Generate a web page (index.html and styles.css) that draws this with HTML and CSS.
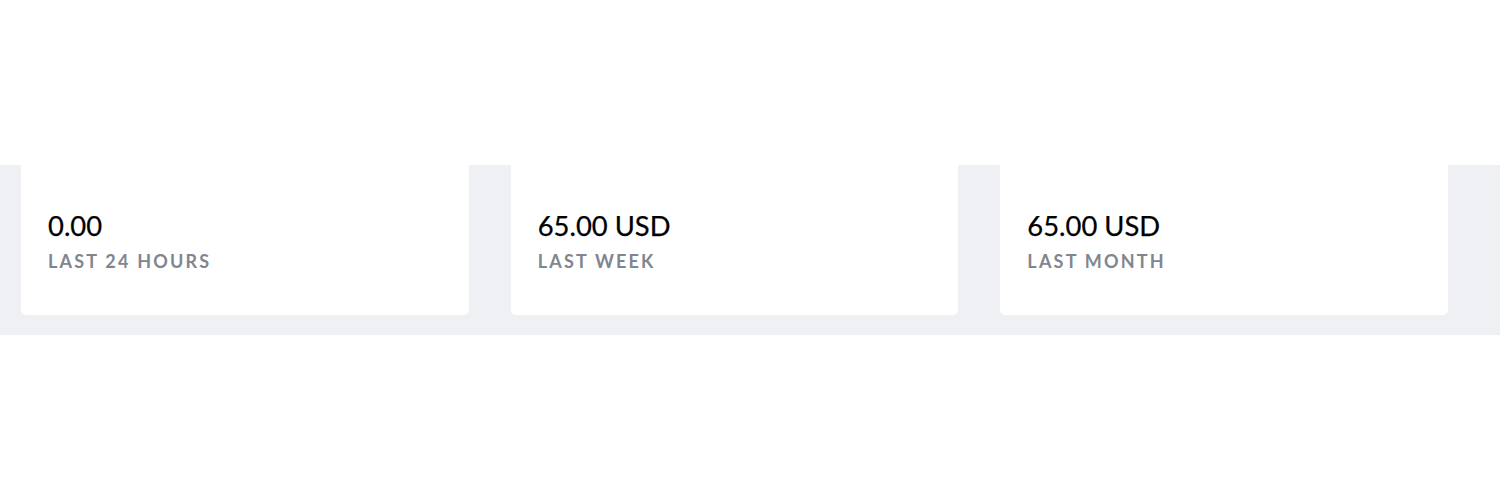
FILE: index.html
```html
<!DOCTYPE html>
<html lang="en">
<head>
    <meta charset="UTF-8">
    <meta name="viewport" content="width=device-width, initial-scale=1.0">
    <title>Earnings</title>
    <link rel="stylesheet" href="styles.css">
</head>
<body>
    <div class="top-space"></div>
    <div class="stats-band">
        <div class="stats">
            <div class="stat-card">
                <div class="stat-value">0.00</div>
                <div class="stat-label">Last 24 hours</div>
            </div>
            <div class="stat-card">
                <div class="stat-value">65.00 USD</div>
                <div class="stat-label">Last week</div>
            </div>
            <div class="stat-card">
                <div class="stat-value">65.00 USD</div>
                <div class="stat-label">Last month</div>
            </div>
        </div>
    </div>
</body>
</html>
```

FILE: styles.css
```css
body {
    margin: 0;
    font-family: Lato, "Open Sans", sans-serif;
    background: #fff;
}
.top-space {
    height: 165px;
}
.stats-band {
    background: #eff0f4;
    padding: 0 52px 20px 21px;
}
.stats {
    display: grid;
    grid-template-columns: 1fr 1fr 1fr;
    gap: 42px;
}
.stat-card {
    background: white;
    height: 150px;
    box-sizing: border-box;
    padding: 45px 27px 0;
    border-radius: 0 0 5px 5px;
}
.stat-value {
    font-size: 27.4px;
    line-height: 32px;
    color: #000;
    -webkit-text-stroke: 0.25px #000;
}
.stat-label {
    margin-top: 8px;
    font-size: 18px;
    font-weight: bold;
    letter-spacing: 2.2px;
    text-transform: uppercase;
    color: #80868f;
}
```
